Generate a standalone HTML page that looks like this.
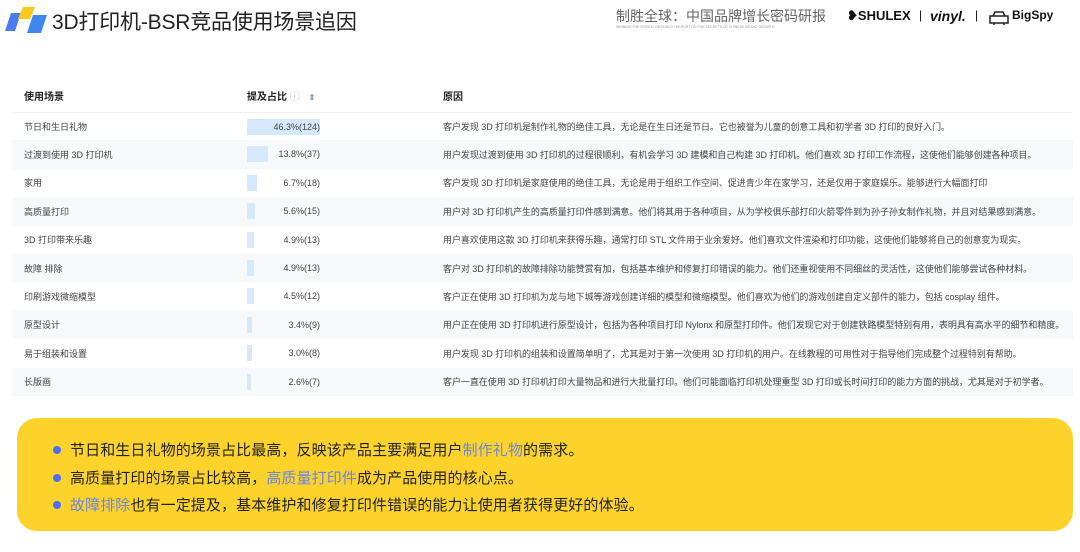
<!DOCTYPE html>
<html><head><meta charset="utf-8"><style>
*{margin:0;padding:0;box-sizing:border-box}
body{width:1080px;height:552px;background:#fff;font-family:"Liberation Sans","Noto Sans CJK SC",sans-serif;position:relative;overflow:hidden;color:#333}
.title{position:absolute;left:52px;top:6px;font-size:21px;color:#222;letter-spacing:-0.2px}
.hdr{position:absolute;left:616px;top:6px;font-size:14px;color:#666}
.sub{position:absolute;left:616px;top:25px;font-size:3.5px;color:#999;white-space:nowrap}
.logos{position:absolute;top:8px;font-weight:bold;color:#111}
table{position:absolute;left:12px;top:80px;width:1061px;border-collapse:collapse;font-size:9px;color:#444}
td{height:28.4px;vertical-align:middle}
tr.h td{height:32px;font-weight:bold;font-size:10px;color:#222;border-bottom:1px solid #f0f0f0}
tr:nth-child(odd):not(.h) td{background:#f7f8fa}
td.a{padding-left:12px;width:235px}
td.b{width:196px;position:relative}
td.c{letter-spacing:-0.05px}
.bar{position:absolute;left:0;top:6px;height:16px;background:#d6e8fc}
.pv{position:absolute;right:123px;top:9px}
.box{position:absolute;left:17px;top:418px;width:1056px;height:113px;background:#fdd32b;border-radius:20px}
.li{position:absolute;left:53px;font-size:15px;color:#222;letter-spacing:0.1px}
.li::before{content:"";position:absolute;left:0;top:7px;width:8px;height:8px;border-radius:50%;background:#4f6ef7}
.li span.t{margin-left:17px}
.bl{color:#6c84e0}
</style></head><body>
<svg style="position:absolute;left:5px;top:7px" width="42" height="26"><polygon points="6,6 16,6 10,24 0,24" fill="#4a7cf0"/><polygon points="18,0 30,0 25,12 13,12" fill="#f9c81c"/><polygon points="28,8 42,8 36,26 22,26" fill="#3f86f0"/></svg>
<div class="title">3D打印机-BSR竞品使用场景追因</div>
<div class="hdr">制胜全球：中国品牌增长密码研报</div>
<div class="sub">WINNING THE WORLD: RESEARCH REPORT ON THE SECRETS OF CHINESE BRAND GROWTH</div>
<div class="logos" style="left:847px;font-size:13px">❥SHULEX</div>
<div class="logos" style="left:919px;font-size:12px;font-weight:normal">|</div>
<div class="logos" style="left:930px;font-size:14px;font-style:italic">vinyl.</div>
<div class="logos" style="left:975px;font-size:12px;font-weight:normal">|</div>
<svg style="position:absolute;left:988px;top:10px" width="22" height="15"><path d="M2 6h18v7H2zM5 6l2-4h8l2 4M6 13v2M16 13v2" fill="none" stroke="#222" stroke-width="1.5"/></svg>
<div class="logos" style="left:1012px;font-size:12px">BigSpy</div>
<table>
<tr class="h"><td class="a">使用场景</td><td class="b">提及占比 <span style="color:#bbb;font-weight:normal">ⓘ</span> <span style="color:#7a90c8;font-size:8px;margin-left:6px">⇕</span></td><td>原因</td></tr>
<tr><td class="a">节日和生日礼物</td><td class="b"><div class="bar" style="width:73px"></div><span class="pv">46.3%(124)</span></td><td class="c">客户发现 3D 打印机是制作礼物的绝佳工具，无论是在生日还是节日。它也被誉为儿童的创意工具和初学者 3D 打印的良好入门。</td></tr>
<tr><td class="a">过渡到使用 3D 打印机</td><td class="b"><div class="bar" style="width:21px"></div><span class="pv">13.8%(37)</span></td><td class="c">用户发现过渡到使用 3D 打印机的过程很顺利，有机会学习 3D 建模和自己构建 3D 打印机。他们喜欢 3D 打印工作流程，这使他们能够创建各种项目。</td></tr>
<tr><td class="a">家用</td><td class="b"><div class="bar" style="width:10px"></div><span class="pv">6.7%(18)</span></td><td class="c">客户发现 3D 打印机是家庭使用的绝佳工具，无论是用于组织工作空间、促进青少年在家学习，还是仅用于家庭娱乐。能够进行大幅面打印</td></tr>
<tr><td class="a">高质量打印</td><td class="b"><div class="bar" style="width:8px"></div><span class="pv">5.6%(15)</span></td><td class="c">用户对 3D 打印机产生的高质量打印件感到满意。他们将其用于各种项目，从为学校俱乐部打印火箭零件到为孙子孙女制作礼物，并且对结果感到满意。</td></tr>
<tr><td class="a">3D 打印带来乐趣</td><td class="b"><div class="bar" style="width:7px"></div><span class="pv">4.9%(13)</span></td><td class="c">用户喜欢使用这款 3D 打印机来获得乐趣，通常打印 STL 文件用于业余爱好。他们喜欢文件渲染和打印功能，这使他们能够将自己的创意变为现实。</td></tr>
<tr><td class="a">故障 排除</td><td class="b"><div class="bar" style="width:7px"></div><span class="pv">4.9%(13)</span></td><td class="c">客户对 3D 打印机的故障排除功能赞赏有加，包括基本维护和修复打印错误的能力。他们还重视使用不同细丝的灵活性，这使他们能够尝试各种材料。</td></tr>
<tr><td class="a">印刷游戏微缩模型</td><td class="b"><div class="bar" style="width:7px"></div><span class="pv">4.5%(12)</span></td><td class="c">客户正在使用 3D 打印机为龙与地下城等游戏创建详细的模型和微缩模型。他们喜欢为他们的游戏创建自定义部件的能力，包括 cosplay 组件。</td></tr>
<tr><td class="a">原型设计</td><td class="b"><div class="bar" style="width:5px"></div><span class="pv">3.4%(9)</span></td><td class="c">用户正在使用 3D 打印机进行原型设计，包括为各种项目打印 Nylonx 和原型打印件。他们发现它对于创建铁路模型特别有用，表明具有高水平的细节和精度。</td></tr>
<tr><td class="a">易于组装和设置</td><td class="b"><div class="bar" style="width:5px"></div><span class="pv">3.0%(8)</span></td><td class="c">用户发现 3D 打印机的组装和设置简单明了，尤其是对于第一次使用 3D 打印机的用户。在线教程的可用性对于指导他们完成整个过程特别有帮助。</td></tr>
<tr><td class="a">长版画</td><td class="b"><div class="bar" style="width:4px"></div><span class="pv">2.6%(7)</span></td><td class="c">客户一直在使用 3D 打印机打印大量物品和进行大批量打印。他们可能面临打印机处理重型 3D 打印或长时间打印的能力方面的挑战，尤其是对于初学者。</td></tr>
</table>
<div class="box"></div>
<div class="li" style="top:439px"><span class="t">节日和生日礼物的场景占比最高，反映该产品主要满足用户<span class="bl">制作礼物</span>的需求。</span></div>
<div class="li" style="top:467px"><span class="t">高质量打印的场景占比较高，<span class="bl">高质量打印件</span>成为产品使用的核心点。</span></div>
<div class="li" style="top:494px"><span class="t"><span class="bl">故障排除</span>也有一定提及，基本维护和修复打印件错误的能力让使用者获得更好的体验。</span></div>
</body></html>
